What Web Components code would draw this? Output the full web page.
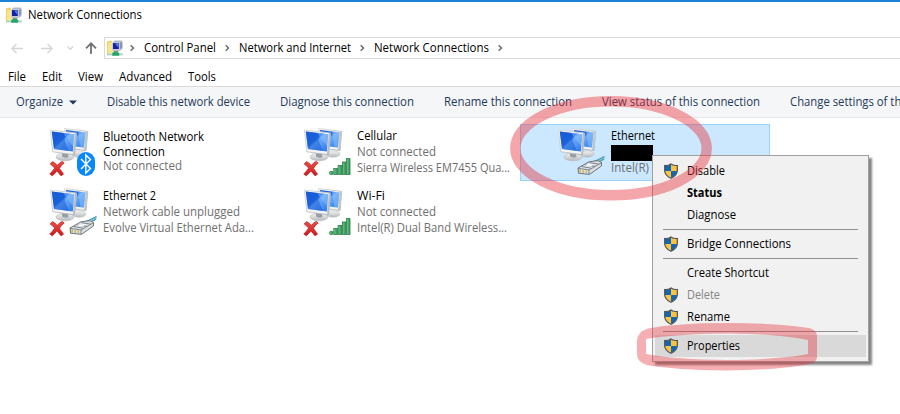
<!DOCTYPE html>
<html lang="en"><head><meta charset="utf-8"><title>Network Connections</title>
<style>html,body{margin:0;height:414px;overflow:hidden;background:#fff}</style></head>
<body><network-window></network-window>
<script>
const define=(name,html,after)=>{
  const t=document.createElement('template');t.innerHTML=html;
  customElements.define(name,class extends HTMLElement{
    constructor(){super();this.attachShadow({mode:'open'}).append(t.content.cloneNode(true));}
    connectedCallback(){if(after)after(this,this.shadowRoot);}
  });
};

/* Text run fitted to a given width */
define('ui-text',`<style>:host{display:block;white-space:pre;flex:none}span{display:inline-block;transform-origin:0 50%}</style><span><slot></slot></span>`,(el,r)=>{
  const w=+el.getAttribute('w');if(!w)return;
  const s=r.querySelector('span');
  el.style.width=w+'px';
  s.style.transform='scaleX('+w/s.getBoundingClientRect().width+')';
});

define('shield-icon',`<style>:host{display:block;width:14px;height:16px}svg{display:block}</style>
<svg width="14" height="16" viewBox="0 0 14 16"><defs><clipPath id="s"><path d="M7 1.2Q9.4 3 13 2.8V8Q12.7 12.4 7 15Q1.3 12.4 1 8V2.8Q4.6 3 7 1.2Z"/></clipPath></defs>
<g clip-path="url(#s)"><path fill="#1266b3" d="M0 0H7V8H0ZM7 8H14V16H7Z"/><path fill="#fdc33c" d="M7 0H14V8H7ZM0 8H7V16H0Z"/></g>
<path d="M7 .9Q9.4 2.7 13.3 2.5V8Q13 12.6 7 15.3Q1 12.6.7 8V2.5Q4.6 2.7 7 .9Z" fill="none" stroke="#4b5050" stroke-width="1.2"/></svg>`);

define('folder-icon',`<style>:host{display:block;width:16px;height:17px;flex:none}svg{display:block}</style>
<svg width="16" height="17" viewBox="0 0 16 17"><path d="M0 1.5 4 .4 5 1.5V12.3L0 14Z" fill="#e9cf61"/><path d="M1 2.5H6V13H.8Z" fill="#fae68a"/>
<path d="M7.5.5H14.5L15.7 1.8V8.6L13.5 10.5H6V2Z" fill="#aeb8ca"/><path d="M5 2.2H12.7V10.4H5Z" fill="#c7cbd8"/><path d="M6 3.1H11.8V9H6Z" fill="#1720a8"/><path d="M8.6 3.3H11.5V7Q9.4 7 8.6 3.3" fill="#527de9"/><path d="M13 3V9L15 7.5V2.3Z" fill="#8794aa"/>
<path d="M6 10.5H12L11 12.3H7.2Z" fill="#8fa0a5"/><path d="M0 13.5H15.8V15.3H0Z" fill="#a7cfbb"/><path d="M7 11.8H10.5L12.2 13.3V15.7H5.2V13.3Z" fill="#25a668"/></svg>`);

define('connection-icon',`<style>:host{display:block;width:58px;height:50px}svg{display:block}.o{display:none}:host([x]) .x,:host([kind=bt]) .bt,:host([kind=eth]) .eth,:host([kind=sig]) .sig{display:block}</style>
<svg width="58" height="50" viewBox="0 0 58 50"><defs>
<linearGradient id="a" x1="0" y1="0" x2="1" y2="1"><stop offset="0" stop-color="#1a60d4"/><stop offset=".42" stop-color="#1d69e8"/><stop offset=".5" stop-color="#6cacf8"/><stop offset="1" stop-color="#2675ee"/></linearGradient>
<linearGradient id="f" x1="0" y1="0" x2="1" y2="1"><stop offset="0" stop-color="#d8dbdd"/><stop offset="1" stop-color="#aab0b5"/></linearGradient>
<linearGradient id="b" x1="0" y1="0" x2="0" y2="1"><stop offset="0" stop-color="#f4f4f4"/><stop offset="1" stop-color="#b7bbbe"/></linearGradient>
<linearGradient id="g" x1="0" y1="0" x2="1" y2="0"><stop offset="0" stop-color="#74c98e"/><stop offset="1" stop-color="#319355"/></linearGradient>
<linearGradient id="r" x1="0" y1="0" x2="0" y2="1"><stop offset="0" stop-color="#ee5148"/><stop offset="1" stop-color="#cf171b"/></linearGradient></defs>
<ellipse cx="30" cy="26" rx="7" ry="3.2" fill="url(#b)" stroke="#bbb" stroke-width=".5"/>
<path d="M15.5.5 38.8 3.4 37 22.5 16.5 20Z" fill="#f1f2f2" stroke="url(#f)" stroke-width=".9"/><path d="M36.8 3.4 38.8 3.4 37 22.5 35 22Z" fill="#c0c5c8"/>
<path d="M17 2 36.4 4.5 34.8 19.5 18 17.5Z" fill="url(#a)"/><path d="M29 3.5 36.4 4.5 34.8 19.5 31.5 19Z" fill="#8ec2fb" opacity=".55"/>
<path d="M12 23 20 24 21 29H13Z" fill="#b7bdc1"/><ellipse cx="16" cy="29" rx="9" ry="3.8" fill="url(#b)" stroke="#b5b8bb" stroke-width=".6"/><path d="M13 24 19 25 19.5 29Q16 30.5 13 28.5Z" fill="#989fa4"/>
<path d="M1.3 2 27.5 5 25.5 26.8 3.8 23.8Z" fill="#f4f4f4" stroke="url(#f)" stroke-width=".9"/><path d="M25.8 5 27.5 5 25.5 26.8 24 26.4Z" fill="#b7bcc0"/>
<path d="M2.8 3.5 25.2 6.2 23.8 23.5 5 21Z" fill="url(#a)"/><path d="M2.8 3.5 14.5 5Q15 13 20 23L5 21Z" fill="#1558d0" opacity=".5"/><path d="M14.5 5 25.2 6.2 24.2 18Q20 14 14.5 5Z" fill="#9dccfc" opacity=".4"/>
<g class="o x"><path d="M1.2 36 3.5 33.6Q6.5 35 8.3 37.6Q10.8 34 13.4 33.4L15.2 35Q12 37.2 10.4 40.4Q12.7 43.2 14.5 46.2L12 47.8Q10 45.2 7.8 42.9Q6 45.5 3.3 47.8L.8 46Q3.9 43 5.7 40.1Q4 37.8 1.2 36Z" fill="url(#r)" stroke="#b5161a" stroke-width=".7"/></g>
<g class="o bt"><rect x="28" y="24" width="18" height="24" rx="9" fill="#0788f8"/><path d="M32 31 41.5 40.5 36.8 45V27L41.5 31.5 32 41" fill="none" stroke="#fff" stroke-width="1.4"/></g>
<g class="o sig" fill="url(#g)" stroke="#287e48" stroke-width=".8"><rect x="26.5" y="43.4" width="3.6" height="3" rx="1"/><rect x="30.8" y="40.4" width="3.6" height="6"/><rect x="35.1" y="37.4" width="3.6" height="9"/><rect x="39.4" y="34" width="3.4" height="12.4"/><rect x="43.4" y="30.6" width="3.6" height="15.8"/></g>
<g class="o eth"><path d="M38 34Q42 32.8 43 31.3L48 28.6 47.2 31.5Z" fill="#8fc3d1"/><path d="M37 33.5Q42 31.5 47.4 28.5M42 34 47 31" stroke="#3f9ab5" stroke-width="1.2" fill="none"/><path d="M21 40 32 33.8 41 32.6 44.5 34.5 44.4 38 32.5 46.4 21.5 45.2Z" fill="#dce0e2" stroke="#5e676d" stroke-width=".9"/><path d="M21 40.3 32 42 44.5 34.7M32 42V46M28 37 38 38.4M32.5 34.7 42 36.2M24.8 38.5 34.5 40.3" stroke="#747d83" stroke-width=".9" fill="none"/><path d="M30 36.5 37 36 34 38.2 28 38Z" fill="#f8fafa"/><path d="M22.3 41.6H24V44.4H22.3ZM25.5 42.2H27V44.8H25.5ZM28.6 42.6H30V45H28.6Z" fill="#cbbb50"/></g></svg>`);

define('connection-tile',`<style>:host{display:flex;box-sizing:border-box;width:250px;height:57px;padding:4px 0 0 37px}
:host([selected]){background:#cce8ff;border:1px solid #99d1ff;padding:3px 0 0 36px}
connection-icon{margin-right:-4px}.t{line-height:16px;color:#6f6f6f}.t ::slotted([slot=name]){color:#000}:host([kind=bt]) .t ::slotted([slot=name]){line-height:15px;position:relative;top:.5px}</style>
<connection-icon></connection-icon><div class="t"><slot name="name"></slot><slot></slot></div>`,(el,r)=>{
  const i=r.querySelector('connection-icon');i.setAttribute('kind',el.getAttribute('kind'));if(el.hasAttribute('x'))i.setAttribute('x','');
});

define('menu-item',`<style>:host{display:flex;align-items:center;height:22px;margin:0 2px;padding-left:9px;color:#000}:host([hot]){background:#d9d9d9}:host([off]){color:#858585}:host([bold]){font-weight:bold}
.i{width:23px;flex:none}:host(:not([shield])) shield-icon{display:none}</style><div class="i"><shield-icon></shield-icon></div><slot></slot>`);
define('menu-line',`<style>:host{display:block;height:7px;padding:0 10px}div{height:1px;background:#919191;position:relative;top:3px}</style><div></div>`);
define('context-menu',`<style>:host{display:block;box-sizing:border-box;width:217px;height:207px;padding:4px 0;background:#f1f1f1;border:1px solid #a0a0a0;box-shadow:3px 3px 2px rgba(0,0,0,.48)}</style><slot></slot>`);
define('crumb-arrow',`<style>:host{display:block;width:6px;height:8px;flex:none}svg{display:block}</style><svg width="6" height="8"><path d="M.7 1.2 3.5 4 .7 6.8" fill="none" stroke="#666" stroke-width="1.4"/></svg>`);

define('network-window',`<style>
:host{display:block;position:relative;width:900px;height:414px;overflow:hidden;background:#fff;font:12px/16px "Open Sans","Noto Sans",sans-serif;color:#000}
.title{display:flex;height:28px;border-top:2px solid #1883d7;align-items:center;padding-left:6px;gap:6px;box-sizing:border-box}
.title folder-icon{margin-top:1px}
.nav{display:flex;height:39px;align-items:center}
.nav>svg{flex:none}
.addr{display:flex;box-sizing:border-box;width:810px;flex:none;height:22px;border:1px solid #d9d9d9;align-items:center;padding-left:2px;margin-top:1px}
.addr ui-text{margin:0 9px 0 8px}
.menu{display:flex;height:19px;padding-left:8px;gap:16px;align-items:center}
.tools{display:flex;box-sizing:border-box;height:32px;border-top:1px solid #d8dade;border-bottom:1px solid #e8eaec;background:#f5f6f7;color:#1e395b;align-items:center;padding-left:16px;gap:30px}
.org{display:flex;align-items:center;gap:6px;width:61px}
.grid{display:grid;grid-template-columns:repeat(3,250px);gap:3px 4px;padding:6px 0 0 12px}
.black{display:block;width:42px;height:16px;background:#000;position:relative;top:1px}
context-menu{position:absolute;left:652px;top:155px}
.marks{position:absolute;left:0;top:0}
</style>
<div class="title"><folder-icon></folder-icon><ui-text w="114">Network Connections</ui-text></div>
<div class="nav"><svg width="104" height="22" viewBox="0 0 104 22" fill="none"><g stroke="#d5d5d5" stroke-width="1.4"><path d="M23 11.5H12M16.5 7 12 11.5 16.5 16M41 11.5H52M47.5 7 52 11.5 47.5 16"/><path d="M67.5 9.5 70.3 12.3 73.1 9.5"/></g><path d="M91 17V6.3M86 11.3 91 6.3 96 11.3" stroke="#707070" stroke-width="1.8"/></svg>
<div class="addr"><folder-icon></folder-icon><crumb-arrow style="margin-left:7px"></crumb-arrow><ui-text w="72">Control Panel</ui-text><crumb-arrow></crumb-arrow><ui-text w="112">Network and Internet</ui-text><crumb-arrow></crumb-arrow><ui-text w="115">Network Connections</ui-text><crumb-arrow></crumb-arrow></div></div>
<div class="menu"><ui-text w="18">File</ui-text><ui-text w="20">Edit</ui-text><ui-text w="25">View</ui-text><ui-text w="53">Advanced</ui-text><ui-text w="28">Tools</ui-text></div>
<div class="tools"><div class="org"><ui-text w="47">Organize</ui-text><svg width="8" height="5"><path d="M0 .5H8L4 4.5Z" fill="#1e395b"/></svg></div><ui-text w="143">Disable this network device</ui-text><ui-text w="134">Diagnose this connection</ui-text><ui-text w="128">Rename this connection</ui-text><ui-text w="158">View status of this connection</ui-text><ui-text w="181">Change settings of this connection</ui-text></div>
<div class="grid">
<connection-tile kind="bt" x><ui-text slot="name" w="101">Bluetooth Network</ui-text><ui-text slot="name" w="62">Connection</ui-text><ui-text w="79">Not connected</ui-text></connection-tile>
<connection-tile kind="sig" x><ui-text slot="name" w="40">Cellular</ui-text><ui-text w="79">Not connected</ui-text><ui-text w="153">Sierra Wireless EM7455 Qua...</ui-text></connection-tile>
<connection-tile kind="eth" selected><ui-text slot="name" w="44">Ethernet</ui-text><i class="black"></i><ui-text w="38">Intel(R)</ui-text></connection-tile>
<connection-tile kind="eth" x><ui-text slot="name" w="53">Ethernet 2</ui-text><ui-text w="137">Network cable unplugged</ui-text><ui-text w="151">Evolve Virtual Ethernet Ada...</ui-text></connection-tile>
<connection-tile kind="sig" x><ui-text slot="name" w="28">Wi-Fi</ui-text><ui-text w="79">Not connected</ui-text><ui-text w="150">Intel(R) Dual Band Wireless...</ui-text></connection-tile>
</div>
<context-menu>
<menu-item shield><ui-text w="38">Disable</ui-text></menu-item><menu-item bold><ui-text w="35">Status</ui-text></menu-item><menu-item><ui-text w="49">Diagnose</ui-text></menu-item><menu-line></menu-line>
<menu-item shield><ui-text w="104">Bridge Connections</ui-text></menu-item><menu-line></menu-line>
<menu-item><ui-text w="82">Create Shortcut</ui-text></menu-item><menu-item shield off><ui-text w="33">Delete</ui-text></menu-item><menu-item shield><ui-text w="43">Rename</ui-text></menu-item><menu-line></menu-line>
<menu-item shield hot><ui-text w="53">Properties</ui-text></menu-item>
</context-menu>
<svg class="marks" width="900" height="414"><ellipse cx="611" cy="148.3" rx="95.7" ry="47" fill="none" stroke="#e62a35" stroke-opacity=".42" stroke-width="10.4"/>
<path fill="#e62a35" fill-opacity=".38" fill-rule="evenodd" d="M637 341Q637 332 648 328.5Q678 323 727 323Q780 323 809 328Q817 330 817 336V357Q817 362 810 364Q780 370 727 370.5Q675 370 647 365Q637 362 637 354ZM646 339V354Q675 359.5 727 360Q780 359.5 808 354V340Q780 334 727 333.5Q675 334 646 339Z"/></svg>`);
</script></body></html>
